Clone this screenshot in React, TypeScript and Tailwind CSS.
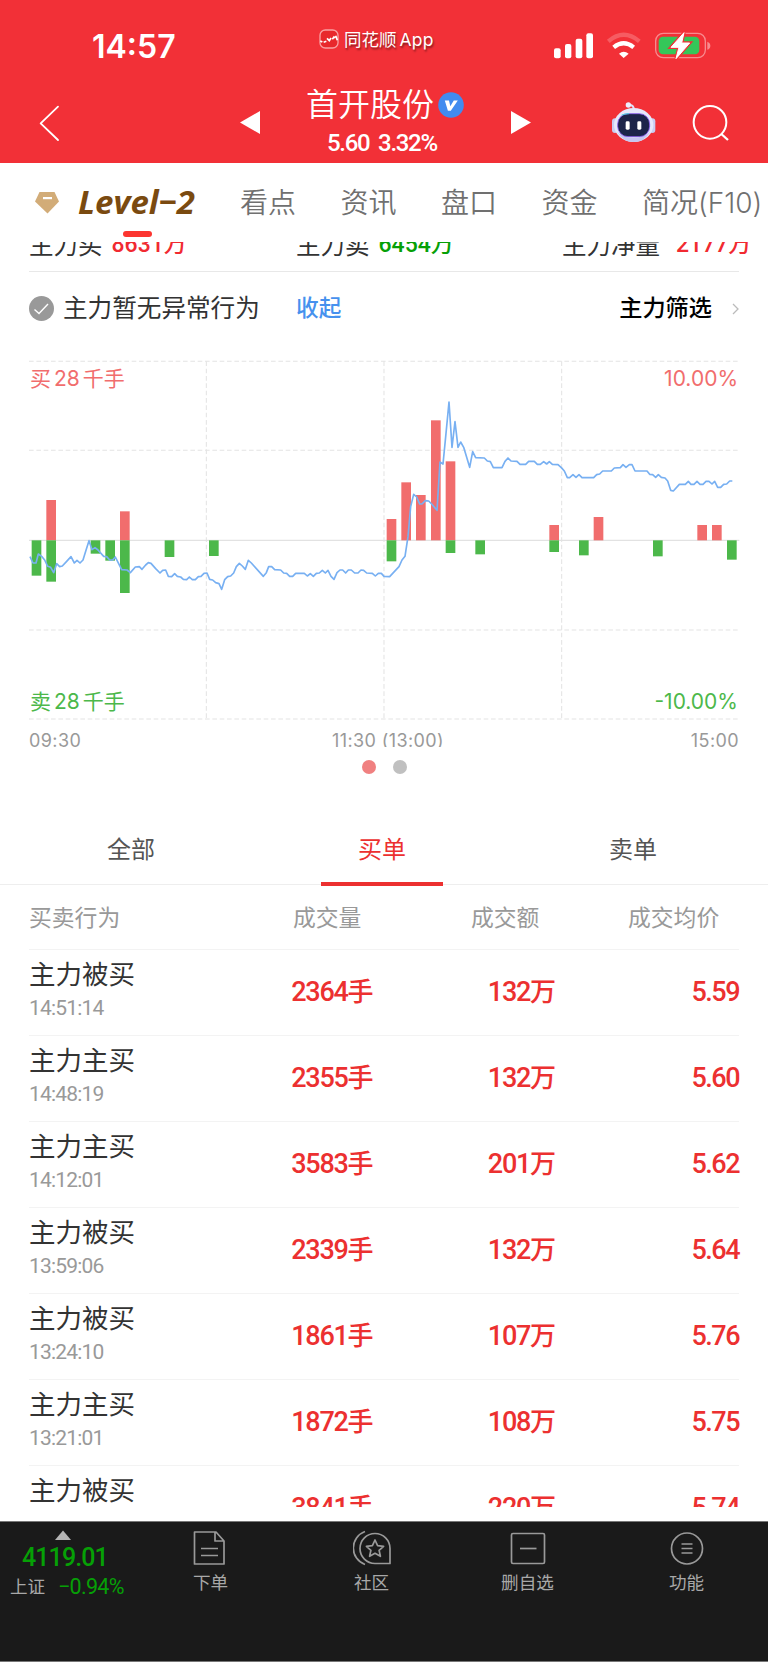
import React from "react";

const CJK = "font-['Inter','Noto_Sans_CJK_SC',sans-serif]";
const DIN = "font-['Roboto','Noto_Sans_CJK_SC',sans-serif]";

// [left, top of the buy bar or 0, bottom of the sell bar or 0]; the zero line is at 571
const bars: [number, number, number][] = [
  [95, 0, 677], [139, 450, 695], [272, 0, 611], [316, 0, 632], [360, 484, 729],
  [494, 0, 621], [627, 0, 618], [1160, 507, 634], [1204, 397, 0], [1248, 435, 0],
  [1293, 211, 0], [1337, 334, 609], [1426, 0, 613], [1648, 525, 606], [1737, 0, 616],
  [1781, 501, 0], [1959, 0, 619], [2092, 525, 0], [2136, 525, 0], [2181, 0, 629],
];

const morning =
  "90,620 99,639 108,639 115,612 126,620 134,630 143,649 152,652 161,668 170,641 179,650 187,648 200,634 213,620 223,639 231,631 240,639 249,630 258,601 267,572 276,599 285,593 294,600 311,619 320,620 329,630 338,630 346,621 356,641 365,659 381,660 391,668 406,651 418,650 426,658 437,645 445,638 453,640 467,656 480,669 488,661 497,660 505,679 515,680 524,671 532,679 542,681 550,688 560,689 568,681 577,689 586,689 595,680 603,679 612,670 621,669 629,688 638,690 647,698 657,701 665,718 674,689 683,680 692,678 701,669 709,650 718,640 727,648 736,658 745,631 754,639 790,679 799,668 806,650 815,650 824,659 842,660 851,669 860,670 869,679 878,679 887,670 913,670 922,678 931,671 940,679 949,670 958,669 967,661 976,669 984,661 993,679 1002,688 1011,668 1020,660 1028,660 1037,669 1045,660 1054,660 1064,669 1074,669 1083,660 1091,661 1100,669 1117,670 1126,678 1135,670 1144,670 1152,679";
const afternoon =
  "1169,680 1197,650 1206,630 1215,619 1224,560 1232,470 1241,433 1250,441 1259,462 1266,462 1276,452 1286,453 1295,462 1311,481 1320,336 1329,342 1338,250 1347,156 1356,292 1365,215 1374,292 1382,276 1391,292 1409,352 1418,305 1427,323 1453,324 1462,333 1471,335 1480,353 1506,353 1515,334 1524,324 1533,333 1551,334 1560,343 1577,343 1586,334 1603,334 1612,343 1621,343 1631,335 1640,342 1648,335 1657,343 1674,344 1684,353 1693,363 1702,383 1709,383 1719,374 1728,382 1737,374 1746,383 1781,383 1790,374 1799,372 1808,363 1834,363 1843,354 1861,353 1869,344 1878,352 1888,344 1896,344 1905,363 1941,363 1949,373 1958,374 1967,382 1975,374 1984,382 1995,384 2003,393 2012,421 2020,423 2038,403 2056,403 2065,394 2073,403 2082,403 2091,394 2100,403 2109,403 2118,394 2127,394 2136,402 2144,394 2153,412 2162,412 2171,403 2180,402 2189,393 2197,393";

const trades = [
  ["主力被买", "14:51:14", "2364", "132", "5.59"],
  ["主力主买", "14:48:19", "2355", "132", "5.60"],
  ["主力主买", "14:12:01", "3583", "201", "5.62"],
  ["主力被买", "13:59:06", "2339", "132", "5.64"],
  ["主力被买", "13:24:10", "1861", "107", "5.76"],
  ["主力主买", "13:21:01", "1872", "108", "5.75"],
  ["主力被买", "", "3841", "220", "5.74"],
];

function StatusBar() {
  return (
    <div className="flex h-[80px] items-start text-white">
      <div className="ml-[92px] mt-[27px] w-[227px] text-[32px] font-semibold leading-10">14:57</div>
      <svg className="mt-[29px]" width="20" height="20" viewBox="0 0 60 60" fill="none">
        <rect x="3" y="3" width="54" height="54" rx="16" fill="#e8282c" stroke="#f9a0a2" strokeWidth="4" />
        <path d="M4 36l6 3M14 40l8-3M24 28l7 7 5-8M40 31l5-7 3 3M50 20l5 14" stroke="#fff" strokeWidth="5" />
      </svg>
      <div className="ml-[5px] mt-[28px] w-[210px] whitespace-nowrap text-[17.5px] leading-6 [text-shadow:1px_2px_2px_rgba(0,0,0,0.45)]">
        同花顺<span className="ml-[3px] tracking-[0.2px]">App</span>
      </div>
      <svg className="mt-[32px]" width="157" height="28" viewBox="507 95 471 84" fill="none">
        <g fill="#fff">
          <rect x="507" y="144" width="20" height="30" rx="6" />
          <rect x="540" y="131" width="19" height="43" rx="6" />
          <rect x="572" y="115" width="20" height="59" rx="6" />
          <rect x="604" y="99" width="20" height="75" rx="6" />
          <path d="M716 173l-14-13q14-12 29 0z" />
        </g>
        <path d="M670 123Q716 84 763 123" stroke="#f65c62" strokeWidth="13" />
        <path d="M686 141Q716 117 746 141" stroke="#fff" strokeWidth="13" />
        <rect x="812" y="99" width="149" height="73" rx="23" stroke="#f88a8e" strokeWidth="4" />
        <rect x="821" y="109" width="122" height="53" rx="13" fill="#34c759" />
        <path d="M967 124q9 3 9 12t-9 12z" fill="#f88a8e" />
        <path d="M897 97l-39 44h24l-9 34 41-47h-24z" fill="#fff" stroke="#f23037" strokeWidth="10" />
        <path d="M897 97l-39 44h24l-9 34 41-47h-24z" fill="#fff" stroke="#fff" strokeWidth="3" strokeLinejoin="round" />
      </svg>
    </div>
  );
}

function TitleBar() {
  return (
    <div className="flex h-[83px] items-start text-white">
      <svg className="ml-[39px] mt-[25px]" width="21" height="37" viewBox="0 0 63 111" fill="none" stroke="#fff" strokeWidth="5.5" strokeLinecap="round" strokeLinejoin="round">
        <path d="M57 5L5 55l52 50" />
      </svg>
      <svg className="ml-[180px] mt-[31px]" width="20" height="23" viewBox="0 0 20 23" fill="#fff">
        <path d="M0 11.500L20 0v23z" />
      </svg>
      <div className="ml-[46px] w-[158px]">
        <div className="mt-[2px] flex h-[46px] items-center">
          <span className="whitespace-nowrap text-[32px] font-[350] leading-[46px]">首开股份</span>
          <svg className="ml-[3.500px]" width="26" height="26" viewBox="0 0 26 26">
            <circle cx="13" cy="13" r="12.800" fill="#428bef" />
            <path d="M6.800 8.500h4.200l1.300 5.800 3.500-5.800h4l-7 10.200H9.900z" fill="#fff" />
          </svg>
        </div>
        <div className={`${DIN} ml-[21px] whitespace-nowrap text-[24px] font-medium leading-[31px] tracking-[-1.300px] [word-spacing:4px]`}>5.60 3.32%</div>
      </div>
      <svg className="ml-[47px] mt-[31px]" width="20" height="23" viewBox="0 0 20 23" fill="#fff">
        <path d="M20 11.500L0 0v23z" />
      </svg>
      <svg className="ml-[80px] mt-[21px]" width="46" height="42" viewBox="680 303 138 126" fill="none">
        <path d="M749 328q-2-14-15-13" stroke="#dfe2fa" strokeWidth="6" />
        <circle cx="732" cy="315" r="8" fill="#eceefe" />
        <rect x="683" y="355" width="18" height="44" rx="9" fill="#c9cdf2" />
        <rect x="795" y="355" width="18" height="44" rx="9" fill="#c9cdf2" />
        <ellipse cx="748" cy="375" rx="59" ry="51" fill="#e6e8fb" />
        <path d="M698 395q18 31 50 31t50-31q-18 18-50 18t-50-18z" fill="#c5c6f0" />
        <rect x="700" y="341" width="96" height="69" rx="31" fill="#1c2449" stroke="#8a5cf0" strokeWidth="2.500" />
        <path d="M712 345q10-4 22-4" stroke="#45d6dc" strokeWidth="3" />
        <rect x="724" y="364" width="12" height="25" rx="4" fill="#fff" />
        <rect x="759" y="364" width="12" height="25" rx="4" fill="#fff" />
      </svg>
      <svg className="ml-[34px] mt-[24px]" width="38" height="38" viewBox="919 312 114 114" fill="none" stroke="#fff" strokeWidth="6">
        <circle cx="976" cy="367" r="49" />
        <path d="M1010 402l20 18" strokeWidth="7" />
      </svg>
    </div>
  );
}

function SectionTabs() {
  return (
    <div className="flex h-[79px] items-start whitespace-nowrap text-[28px] font-[350] leading-10 text-[#707070]">
      <svg className="ml-[35px] mt-[29px]" width="24" height="22" viewBox="0 0 24 22">
        <path d="M4.500 0h15L24 9.500 12.500 21.500 0 9.500z" fill="#d2ac78" />
        <rect x="8" y="5" width="9" height="2.200" fill="#fff" />
      </svg>
      <div className="ml-[19px] flex w-[162px] flex-col">
        <div className="mt-[19px] font-['Open_Sans',sans-serif] text-[33px] font-bold italic leading-10 text-[#7a4a10]">Level−2</div>
        <div className="ml-[45px] mt-[9px] h-[6px] w-[29px] rounded-full bg-[#fc3530]" />
      </div>
      {["看点", "资讯", "盘口", "资金"].map((t) => (
        <div key={t} className="mt-[20px] w-[100.500px]">{t}</div>
      ))}
      <div className="mt-[20px]">简况<span className="font-light">(F10)</span></div>
    </div>
  );
}

function Peek({ label, value, color, width, gap }: { label: string; value: string; color: string; width: string; gap: string }) {
  return (
    <div className={`flex shrink-0 items-end whitespace-nowrap text-[24.500px] leading-[52px] text-[#333] ${gap} ${width}`}>
      <span>{label}</span>
      <span className={`${DIN} text-[23px] font-medium leading-[53px] ${color}`}>{value}</span>
    </div>
  );
}

function Behaviour() {
  return (
    <>
      <div className="ml-[29px] flex h-[29px] items-end overflow-hidden">
        <Peek label="主力买" value="8631万" color="text-[#f12a31]" width="w-[267px]" gap="gap-[9px]" />
        <Peek label="主力卖" value="6454万" color="text-[#06a006]" width="w-[266px]" gap="gap-[9px]" />
        <Peek label="主力净量" value="2177万" color="text-[#f12a31]" width="w-[200px]" gap="gap-[16px]" />
      </div>
      <div className="mx-[29px] flex h-[79px] items-start border-t border-[#e8e8e8] pt-[18px] leading-9">
        <svg className="mt-[6px]" width="25" height="25" viewBox="0 0 25 25" fill="none">
          <circle cx="12.500" cy="12.500" r="12.500" fill="#999" />
          <path d="M5.500 13.500l4.500 4 9-9.500" stroke="#fff" strokeWidth="1.400" />
        </svg>
        <span className="ml-[9px] w-[233px] text-[24.600px] text-[#333]">主力暂无异常行为</span>
        <span className="text-[22.700px] font-medium text-[#4691ee]">收起</span>
        <span className="ml-auto text-[23.200px] font-medium text-black">主力筛选</span>
        <svg className="ml-[20px] mt-[13px]" width="7" height="12" viewBox="0 0 7 12" fill="none" stroke="#bbb" strokeWidth="1.300">
          <path d="M1 1l5 5-5 5" />
        </svg>
      </div>
    </>
  );
}

function Chart() {
  return (
    <div className={`relative mx-[29px] h-[380px] text-[21px] leading-[30px] ${CJK}`}>
      <svg width="711" height="380" viewBox="87 0 2133 1140" fill="none">
        <g stroke="#e4e4e4" strokeWidth="3.200" strokeDasharray="14 8">
          {[34, 301, 840, 1107].map((y) => <path key={y} d={`M87 ${y}H2214`} />)}
          {[619, 1152, 1685].map((x) => <path key={x} d={`M${x} 34V1107`} />)}
        </g>
        <path d="M87 571H2218" stroke="#e2e2e2" strokeWidth="3.500" />
        {bars.map(([x, up, down]) => (
          <g key={x}>
            {up > 0 && <rect x={x} y={up} width="29" height={571 - up} fill="#f16d6d" />}
            {down > 0 && <rect x={x} y="571" width="29" height={down - 571} fill="#4cb84a" />}
          </g>
        ))}
        <polyline points={`${morning} ${afternoon}`} stroke="#78b0f2" strokeWidth="5" strokeLinejoin="round" />
      </svg>
      <div className="absolute left-px top-[14px] text-[#f16d6d]">买<span className="mx-[3px]">28</span>千手</div>
      <div className="absolute right-px top-[14px] text-[#f16d6d]">10.00%</div>
      <div className="absolute left-px top-[337px] text-[#4cb84a]">卖<span className="mx-[3px]">28</span>千手</div>
      <div className="absolute right-px top-[337px] text-[#4cb84a]">-10.00%</div>
    </div>
  );
}

function ChartAxis() {
  return (
    <>
      <div className="mx-[29px] flex h-[17px] justify-between overflow-hidden text-[18px] leading-[21px] tracking-[0.400px] text-[#999]">
        <span>09:30</span>
        <span className="ml-1">11:30 (13:00)</span>
        <span>15:00</span>
      </div>
      <div className="flex h-[63px] justify-center gap-[17px] pt-[13px]">
        <span className="h-[14px] w-[14px] rounded-full bg-[#f08080]" />
        <span className="h-[14px] w-[14px] rounded-full bg-[#c0c0c0]" />
      </div>
    </>
  );
}

function OrderTabs() {
  return (
    <div className="flex h-[75px] justify-center gap-[129px] border-b border-[#eee] pr-[4px] text-center text-[24px] leading-[80px] text-[#555]">
      <div className="w-[122px]">全部</div>
      <div className="h-[76px] w-[122px] border-b-4 border-[#ec3030] text-[#ec3030]">买单</div>
      <div className="w-[122px]">卖单</div>
    </div>
  );
}

function Trades() {
  return (
    <div className="h-[622px] overflow-hidden">
      <div className="mx-[29px] flex h-[65px] border-b border-[#f3f3f3] text-[22.800px] leading-[65px] text-[#999]">
        <span className="w-[264px]">买卖行为</span>
        <span className="w-[178px]">成交量</span>
        <span className="w-[157px]">成交额</span>
        <span>成交均价</span>
      </div>
      {trades.map(([name, time, volume, amount, price]) => (
        <div key={volume} className="mx-[29px] flex h-[86px] border-b border-[#f3f3f3]">
          <div className="w-[160px] pt-[6px]">
            <div className="text-[26.500px] leading-9 text-[#333]">{name}</div>
            <div className={`${DIN} pt-[2px] text-[21px] leading-[28px] tracking-[-0.800px] text-[#999]`}>{time}</div>
          </div>
          <div className={`${DIN} flex flex-1 text-right text-[27px] font-medium leading-[85px] text-[#ec3030]`}>
            <div className="w-[184.500px]"><span className="tracking-[-1.300px]">{volume}</span><span className="text-[26px]">手</span></div>
            <div className="w-[182.500px]"><span className="tracking-[-1.300px]">{amount}</span><span className="text-[26px]">万</span></div>
            <div className="w-[183px] tracking-[-1.500px]">{price}</div>
          </div>
        </div>
      ))}
    </div>
  );
}

function NavItem({ label, children }: { label: string; children: React.ReactNode }) {
  return (
    <div className="flex w-[159px] flex-col items-center text-[17.600px] leading-6 text-[#a8a8a8]">
      <svg width="38" height="36" viewBox="0 0 38 36" fill="none" stroke="#999" strokeWidth="1.700">{children}</svg>
      <span className="mt-[5px]">{label}</span>
    </div>
  );
}

function BottomNav() {
  return (
    <div className="mt-[14px] flex h-[141px] border-b border-t border-b-[#777] border-t-[#777] bg-[#1a1a1a] pt-[8px]">
      <div className={`${DIN} w-[131px] text-[#06a006]`}>
        <svg className="ml-[55px]" width="16" height="10" viewBox="0 0 16 10"><path d="M8 .500L16 10H0z" fill="#b5b5b5" /></svg>
        <div className="ml-[22px] text-[25px] font-medium leading-[36px] tracking-[-0.900px]">4119.01</div>
        <div className="ml-[10px] flex text-[21.500px] leading-[21px] tracking-[-0.700px]">
          <span className="w-[48px] pt-px text-[17.600px] tracking-normal text-[#a8a8a8]">上证</span>
          <span>−0.94%</span>
        </div>
      </div>
      <NavItem label="下单">
        <path d="M5 2h19l8 9v23H2.500V2zM23 2v9h9M9 18.500h17M9 25.500h17" strokeLinejoin="round" />
      </NavItem>
      <div className="-mr-[3px] ml-[2px] flex">
        <NavItem label="社区">
          <path d="M12 1.500A17.500 17.500 0 0 0 12 34.500" />
          <path d="M22 3.500a15 15 0 1 0 0 30h15V18.500a15 15 0 0 0-15-15z" strokeLinejoin="round" />
          <path d="M22 10l2.600 5.600 6 .700-4.500 4 1.300 6-5.400-3-5.400 3 1.300-6-4.500-4 6-.700z" strokeLinejoin="round" />
        </NavItem>
      </div>
      <NavItem label="删自选">
        <rect x="2.500" y="3.500" width="33" height="30" rx="1.500" />
        <path d="M11 18.500h16.500" />
      </NavItem>
      <NavItem label="功能">
        <circle cx="19" cy="18.500" r="15.500" />
        <path d="M13.500 14h11M13.500 18.500h11M13.500 23h11" />
      </NavItem>
    </div>
  );
}

export default function App() {
  return (
    <div className={`${CJK} h-[1662px] w-[768px] overflow-hidden bg-white`}>
      <header className="bg-[#f23037]">
        <StatusBar />
        <TitleBar />
      </header>
      <SectionTabs />
      <Behaviour />
      <Chart />
      <ChartAxis />
      <OrderTabs />
      <Trades />
      <BottomNav />
    </div>
  );
}
